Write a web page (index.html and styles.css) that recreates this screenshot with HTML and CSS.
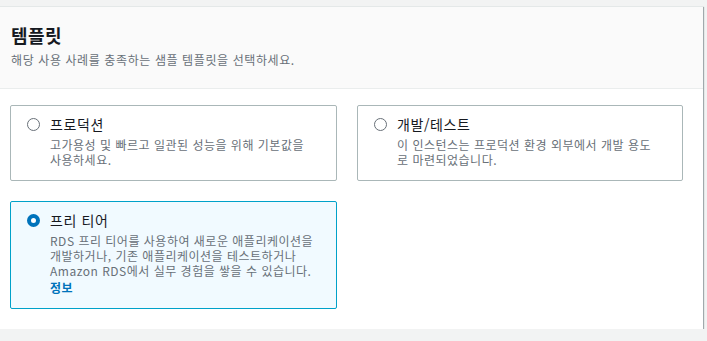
FILE: index.html
```html
<!DOCTYPE html>
<html lang="ko">
<head>
<meta charset="UTF-8">
<title>템플릿</title>
<link rel="stylesheet" href="styles.css">
</head>
<body>

	<div class="panel">
		<div class="panel-head">
			<h2 class="panel-title">템플릿</h2>
			<p class="panel-desc">해당 사용 사례를 충족하는 샘플 템플릿을 선택하세요.</p>
		</div>

		<div class="panel-body">
			<div class="tiles">
				<label class="tile">
					<span class="radio"></span>
					<span class="tile-text">
						<span class="tile-title">프로덕션</span>
						<span class="tile-desc">고가용성 및 빠르고 일관된 성능을 위해 기본값을 사용하세요.</span>
					</span>
				</label>

				<label class="tile">
					<span class="radio"></span>
					<span class="tile-text">
						<span class="tile-title">개발/테스트</span>
						<span class="tile-desc">이 인스턴스는 프로덕션 환경 외부에서 개발 용도로 마련되었습니다.</span>
					</span>
				</label>

				<label class="tile selected">
					<span class="radio on"></span>
					<span class="tile-text">
						<span class="tile-title">프리 티어</span>
						<span class="tile-desc">RDS 프리 티어를 사용하여 새로운 애플리케이션을 개발하거나, 기존 애플리케이션을 테스트하거나 Amazon RDS에서 실무 경험을 쌓을 수 있습니다.</span>
						<a class="info" href="#">정보</a>
					</span>
				</label>
			</div>
		</div>
	</div>

</body>
</html>
```

FILE: styles.css
```css
body {
	margin: 0;
	background: #f2f3f3;
	font-family: "Noto Sans CJK KR", "Noto Sans", sans-serif;
	color: #16191f;
}

.panel {
	margin-top: 6px;
	width: 703px;
	background: #ffffff;
	border-top: 1px solid #e4e8e8;
	box-shadow: 1px 1px 1px 0 rgba(0, 28, 36, 0.3), 0 1px 1px 0 rgba(0, 28, 36, 0.3);
}

.panel-head {
	background: #fafafa;
	border-bottom: 1px solid #eaeded;
	padding: 17px 10px 20px 11px;
}

.panel-title {
	margin: 0;
	font-size: 18px;
	line-height: 22px;
	font-weight: bold;
	letter-spacing: 0.4px;
}

.panel-desc {
	margin: 6px 0 0;
	font-size: 12px;
	line-height: 16px;
	letter-spacing: 0.6px;
	color: #687078;
}

.panel-body {
	padding: 16px 20px 20px 10px;
}

.tiles {
	display: grid;
	grid-template-columns: 327px 326px;
	column-gap: 20px;
	row-gap: 20px;
	align-items: stretch;
}

.tile {
	display: flex;
	align-items: flex-start;
	border: 1px solid #aab7b8;
	border-radius: 2px;
	padding: 8px 21px 13px 16px;
	background: #ffffff;
}

.tile.selected {
	border-color: #00a1c9;
	background: #f1faff;
}

.radio {
	flex: none;
	width: 13px;
	height: 13px;
	box-sizing: border-box;
	border: 1px solid #687078;
	border-radius: 50%;
	margin-top: 4px;
	margin-right: 10px;
	background: #ffffff;
}

.radio.on {
	border: 4px solid #0073bb;
}

.tile-text {
	display: flex;
	flex-direction: column;
}

.tile-title {
	font-size: 14px;
	line-height: 20px;
	letter-spacing: 0.6px;
}

.tile-desc {
	margin-top: 3px;
	font-size: 12px;
	line-height: 15px;
	letter-spacing: 0.5px;
	color: #687078;
}

.info {
	margin-top: 2px;
	font-size: 12px;
	line-height: 15px;
	font-weight: bold;
	letter-spacing: 0.5px;
	color: #0073bb;
	text-decoration: none;
}
```
